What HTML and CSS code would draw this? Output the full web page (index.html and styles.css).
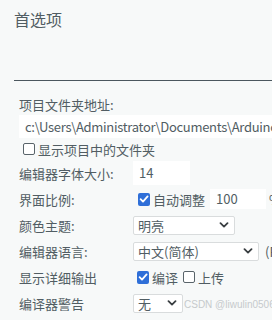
FILE: index.html
```html
<!DOCTYPE html>
<html lang="zh-CN">
    <head>
        <title>首选项</title>
        <meta name="viewport" content="width=device-width, initial-scale=1.0">
        <link rel="stylesheet" href="styles.css">
    </head>
    <body>

        <header class="head">
            <h1 class="head-title">首选项</h1>
        </header>

        <main class="prefs">
            <div class="field-label">项目文件夹地址:</div>
            <div class="path-box">c:\Users\Administrator\Documents\Arduino</div>
            <div class="check-row">
                <span class="box"></span>
                <span>显示项目中的文件夹</span>
            </div>

            <div class="grid">
                <span class="label">编辑器字体大小:</span>
                <div class="control">
                    <span class="text-input size-input">14</span>
                </div>

                <span class="label">界面比例:</span>
                <div class="control scale">
                    <span class="box checked">
                        <svg viewBox="0 0 12 12" width="12" height="12"><path d="M2.6 6.2 L5 8.6 L9.6 3.4" fill="none" stroke="#fff" stroke-width="1.8" stroke-linecap="round" stroke-linejoin="round"/></svg>
                    </span>
                    <span>自动调整</span>
                    <span class="text-input zoom-input">100</span>
                    <span class="unit">%</span>
                </div>

                <span class="label">颜色主题:</span>
                <div class="control">
                    <div class="select theme-select">
                        <span>明亮</span>
                        <svg viewBox="0 0 10 6" width="10" height="6"><path d="M1.5 1.2 L5 4.6 L8.5 1.2" fill="none" stroke="#3a3f42" stroke-width="1.8" stroke-linecap="round" stroke-linejoin="round"/></svg>
                    </div>
                </div>

                <span class="label">编辑器语言:</span>
                <div class="control">
                    <div class="select lang-select">
                        <span>中文(简体)</span>
                        <svg viewBox="0 0 10 6" width="10" height="6"><path d="M1.5 1.2 L5 4.6 L8.5 1.2" fill="none" stroke="#3a3f42" stroke-width="1.8" stroke-linecap="round" stroke-linejoin="round"/></svg>
                    </div>
                    <span class="note">(Reload required)</span>
                </div>

                <span class="label">显示详细输出</span>
                <div class="control verbose">
                    <span class="box checked">
                        <svg viewBox="0 0 12 12" width="12" height="12"><path d="M2.6 6.2 L5 8.6 L9.6 3.4" fill="none" stroke="#fff" stroke-width="1.8" stroke-linecap="round" stroke-linejoin="round"/></svg>
                    </span>
                    <span>编译</span>
                    <span class="box"></span>
                    <span>上传</span>
                </div>

                <span class="label">编译器警告</span>
                <div class="control">
                    <div class="select warn-select">
                        <span>无</span>
                        <svg viewBox="0 0 10 6" width="10" height="6"><path d="M1.5 1.2 L5 4.6 L8.5 1.2" fill="none" stroke="#3a3f42" stroke-width="1.8" stroke-linecap="round" stroke-linejoin="round"/></svg>
                    </div>
                    <span class="watermark">CSDN @liwulin0506</span>
                </div>
            </div>

            <div class="check-row">
                <span class="box"></span>
                <span>上传后验证代码</span>
            </div>
        </main>

    </body>
</html>
```

FILE: styles.css
```css
* {
    box-sizing: border-box;
    margin: 0;
}

html, body {
    overflow: hidden;
}

html {
    background: #f7f9f9;
    color: #515d63;
    font-family: "Noto Sans CJK SC", sans-serif;
    font-size: 13px;
}

body {
    width: 272px;
    height: 320px;
}

.head {
    padding: 9px 0 0 14px;
}

.head-title {
    height: 72px;
    border-bottom: 1px solid #4b575e;
    font-size: 16px;
    font-weight: normal;
    line-height: 20px;
}

.prefs {
    padding: 14px 0 0 19px;
}

.field-label {
    line-height: 20px;
}

.path-box {
    width: 400px;
    height: 23px;
    padding-left: 6px;
    background: #fff;
    letter-spacing: -0.3px;
    line-height: 23px;
    white-space: nowrap;
}

.check-row {
    display: flex;
    align-items: center;
    gap: 3px;
    height: 22px;
    padding-left: 4px;
}

.box {
    display: inline-flex;
    flex: none;
    width: 12px;
    height: 12px;
    border: 1px solid #59646a;
    border-radius: 2px;
    background: #fff;
}

.box.checked {
    width: 12px;
    height: 13px;
    border: none;
    background: #2f6fd8;
    align-items: center;
}

.grid {
    display: grid;
    grid-template-columns: 114px auto;
    grid-auto-rows: 26px;
    align-items: center;
    width: 300px;
}

.control {
    display: flex;
    align-items: center;
    white-space: nowrap;
}

.text-input {
    display: block;
    padding-left: 6px;
    background: #fff;
}

.size-input {
    width: 57px;
    height: 24px;
    line-height: 24px;
}

.scale, .verbose {
    gap: 3px;
    padding-left: 5px;
}

.zoom-input {
    width: 56px;
    height: 20px;
    margin-left: 2px;
    line-height: 20px;
}

.verbose {
    padding-left: 4px;
}

.verbose .box:not(.checked) {
    margin-left: 2px;
}

.select {
    display: flex;
    align-items: center;
    justify-content: space-between;
    height: 19px;
    padding: 0 5px 0 4px;
    border: 1px solid #d9dcdd;
    border-radius: 2px;
    background: #fff;
}

.theme-select {
    width: 102px;
}

.lang-select {
    width: 126px;
}

.warn-select {
    width: 50px;
}

.note {
    margin-left: 6px;
}

.watermark {
    margin-left: 1px;
    padding-top: 3px;
    color: #c6cacc;
    font-family: "Liberation Sans", sans-serif;
    font-size: 10px;
}
```
